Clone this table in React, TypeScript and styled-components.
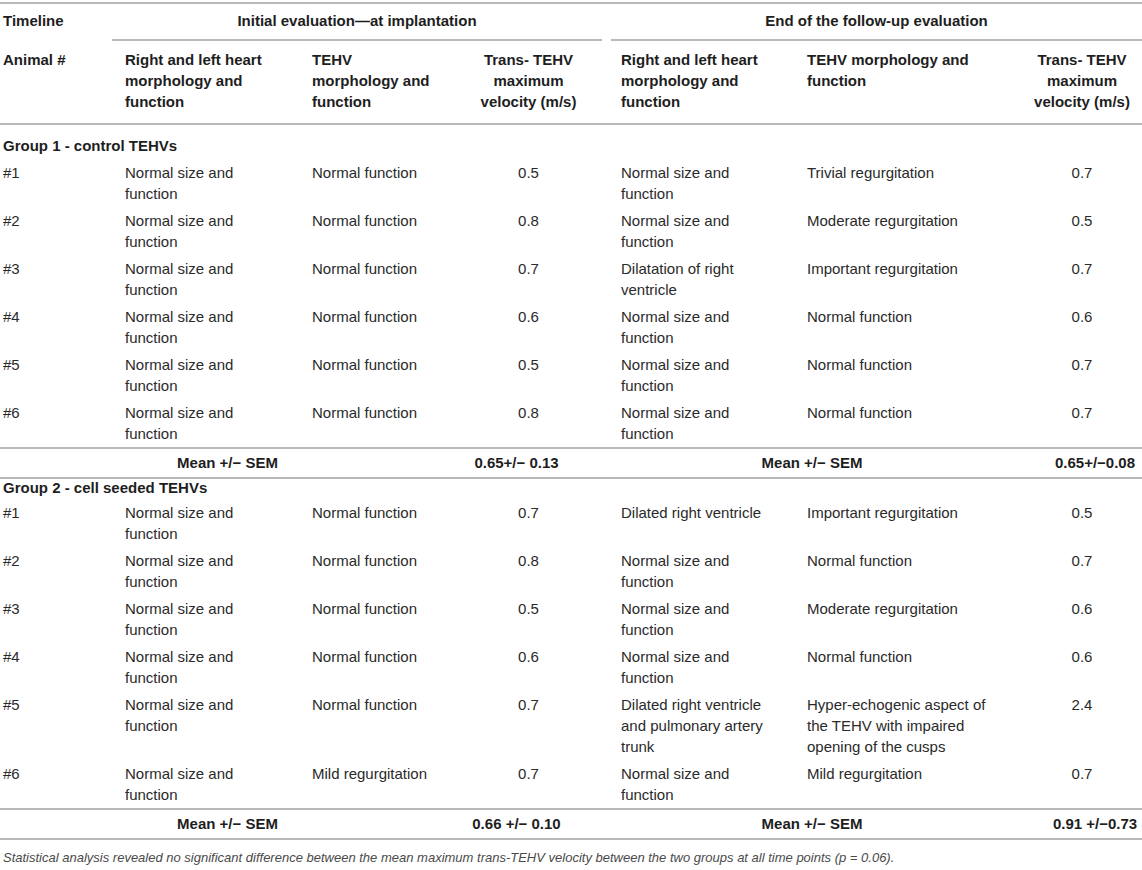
import React from "react";
import styled, { createGlobalStyle } from "styled-components";

const Global = createGlobalStyle`
  html, body { margin: 0; padding: 0; background: #ffffff; }
  body { font-family: "Liberation Sans", Arial, Helvetica, sans-serif; color: #2a2a2a; }
`;

const Page = styled.div`
  width: 1142px;
  padding-top: 2px;
`;

const Table = styled.table`
  width: 1142px;
  border-collapse: collapse;
  table-layout: fixed;
  border-top: 2px solid #b9b9b9;
  font-size: 15px;
  line-height: 21px;
`;

const Th = styled.th<{ $align?: string; $pl?: number; $pr?: number }>`
  font-weight: bold;
  color: #1e1e1e;
  text-align: ${(p) => p.$align || "left"};
  vertical-align: top;
  padding: 6px ${(p) => p.$pr ?? 0}px 0 ${(p) => p.$pl ?? 0}px;
`;

const SpanHead = styled.div<{ $ml?: number }>`
  margin-left: ${(p) => p.$ml ?? 0}px;
  padding-bottom: 8px;
  border-bottom: 2px solid #b9b9b9;
  text-align: center;
`;

const SubHeadRow = styled.tr`
  border-bottom: 2px solid #b9b9b9;
`;

const SubTh = styled.th<{ $align?: string; $pl?: number; $pr?: number }>`
  font-weight: bold;
  color: #1e1e1e;
  text-align: ${(p) => p.$align || "left"};
  vertical-align: top;
  padding: 8px ${(p) => p.$pr ?? 0}px 11px ${(p) => p.$pl ?? 0}px;
`;

const GroupCell = styled.td<{ $pt: number; $lh: number }>`
  font-weight: bold;
  color: #1e1e1e;
  padding: ${(p) => p.$pt}px 0 3px 3px;
  line-height: ${(p) => p.$lh}px;
`;

const Td = styled.td<{ $align?: string; $pl?: number; $pr?: number }>`
  vertical-align: top;
  text-align: ${(p) => p.$align || "left"};
  padding: 3px ${(p) => p.$pr ?? 0}px 3px ${(p) => p.$pl ?? 0}px;
`;

const MeanRow = styled.tr`
  border-top: 2px solid #b9b9b9;
  border-bottom: 2px solid #b9b9b9;
`;

const MeanCell = styled.td<{ $pl?: number; $pr?: number }>`
  font-weight: bold;
  color: #1e1e1e;
  text-align: center;
  padding: 3px ${(p) => p.$pr ?? 0}px 4px ${(p) => p.$pl ?? 0}px;
`;

const Footnote = styled.p`
  margin: 0;
  padding: 9px 0 0 3px;
  font-size: 13px;
  line-height: 17px;
  font-style: italic;
  color: #4a4a4a;
`;

type Row = [string, string, string, string, string, string, string];

const group1: Row[] = [
  ["#1", "Normal size and function", "Normal function", "0.5", "Normal size and function", "Trivial regurgitation", "0.7"],
  ["#2", "Normal size and function", "Normal function", "0.8", "Normal size and function", "Moderate regurgitation", "0.5"],
  ["#3", "Normal size and function", "Normal function", "0.7", "Dilatation of right ventricle", "Important regurgitation", "0.7"],
  ["#4", "Normal size and function", "Normal function", "0.6", "Normal size and function", "Normal function", "0.6"],
  ["#5", "Normal size and function", "Normal function", "0.5", "Normal size and function", "Normal function", "0.7"],
  ["#6", "Normal size and function", "Normal function", "0.8", "Normal size and function", "Normal function", "0.7"],
];

const group2: Row[] = [
  ["#1", "Normal size and function", "Normal function", "0.7", "Dilated right ventricle", "Important regurgitation", "0.5"],
  ["#2", "Normal size and function", "Normal function", "0.8", "Normal size and function", "Normal function", "0.7"],
  ["#3", "Normal size and function", "Normal function", "0.5", "Normal size and function", "Moderate regurgitation", "0.6"],
  ["#4", "Normal size and function", "Normal function", "0.6", "Normal size and function", "Normal function", "0.6"],
  ["#5", "Normal size and function", "Normal function", "0.7", "Dilated right ventricle and pulmonary artery trunk", "Hyper-echogenic aspect of the TEHV with impaired opening of the cusps", "2.4"],
  ["#6", "Normal size and function", "Mild regurgitation", "0.7", "Normal size and function", "Mild regurgitation", "0.7"],
];

const DataRow = ({ r }: { r: Row }) => (
  <tr>
    <Td $pl={3}>{r[0]}</Td>
    <Td $pl={13} $pr={15}>{r[1]}</Td>
    <Td $pl={12} $pr={18}>{r[2]}</Td>
    <Td $align="center" $pr={0}>{r[3]}</Td>
    <Td $pl={19} $pr={19}>{r[4]}</Td>
    <Td $pl={12} $pr={27}>{r[5]}</Td>
    <Td $align="center">{r[6]}</Td>
  </tr>
);

const Mean = ({ a, b }: { a: string; b: string }) => (
  <MeanRow>
    <MeanCell colSpan={3}>Mean +/− SEM</MeanCell>
    <MeanCell $pr={24}>{a}</MeanCell>
    <MeanCell colSpan={2}>Mean +/− SEM</MeanCell>
    <MeanCell $pl={26}>{b}</MeanCell>
  </MeanRow>
);

export default function App() {
  return (
    <Page>
      <Global />
      <Table>
        <colgroup>
          <col style={{ width: 112 }} />
          <col style={{ width: 188 }} />
          <col style={{ width: 155 }} />
          <col style={{ width: 147 }} />
          <col style={{ width: 193 }} />
          <col style={{ width: 227 }} />
          <col style={{ width: 120 }} />
        </colgroup>
        <thead>
          <tr>
            <Th $pl={3}>Timeline</Th>
            <Th colSpan={3}>
              <SpanHead>Initial evaluation—at implantation</SpanHead>
            </Th>
            <Th colSpan={3}>
              <SpanHead $ml={9}>End of the follow-up evaluation</SpanHead>
            </Th>
          </tr>
          <SubHeadRow>
            <SubTh $pl={3}>Animal #</SubTh>
            <SubTh $pl={13}>
              Right and left heart
              <br />
              morphology and
              <br />
              function
            </SubTh>
            <SubTh $pl={12}>
              TEHV
              <br />
              morphology and
              <br />
              function
            </SubTh>
            <SubTh $align="center">
              Trans- TEHV
              <br />
              maximum
              <br />
              velocity (m/s)
            </SubTh>
            <SubTh $pl={19}>
              Right and left heart
              <br />
              morphology and
              <br />
              function
            </SubTh>
            <SubTh $pl={12}>
              TEHV morphology and
              <br />
              function
            </SubTh>
            <SubTh $align="center">
              Trans- TEHV
              <br />
              maximum
              <br />
              velocity (m/s)
            </SubTh>
          </SubHeadRow>
        </thead>
        <tbody>
          <tr>
            <GroupCell colSpan={7} $pt={10} $lh={21}>Group 1 - control TEHVs</GroupCell>
          </tr>
          {group1.map((r) => (
            <DataRow key={"g1" + r[0]} r={r} />
          ))}
          <Mean a="0.65+/− 0.13" b="0.65+/−0.08" />
          <tr>
            <GroupCell colSpan={7} $pt={0} $lh={17}>Group 2 - cell seeded TEHVs</GroupCell>
          </tr>
          {group2.map((r) => (
            <DataRow key={"g2" + r[0]} r={r} />
          ))}
          <Mean a="0.66 +/− 0.10" b="0.91 +/−0.73" />
        </tbody>
      </Table>
      <Footnote>
        Statistical analysis revealed no significant difference between the mean maximum trans-TEHV velocity between the two groups at all time points (p = 0.06).
      </Footnote>
    </Page>
  );
}
